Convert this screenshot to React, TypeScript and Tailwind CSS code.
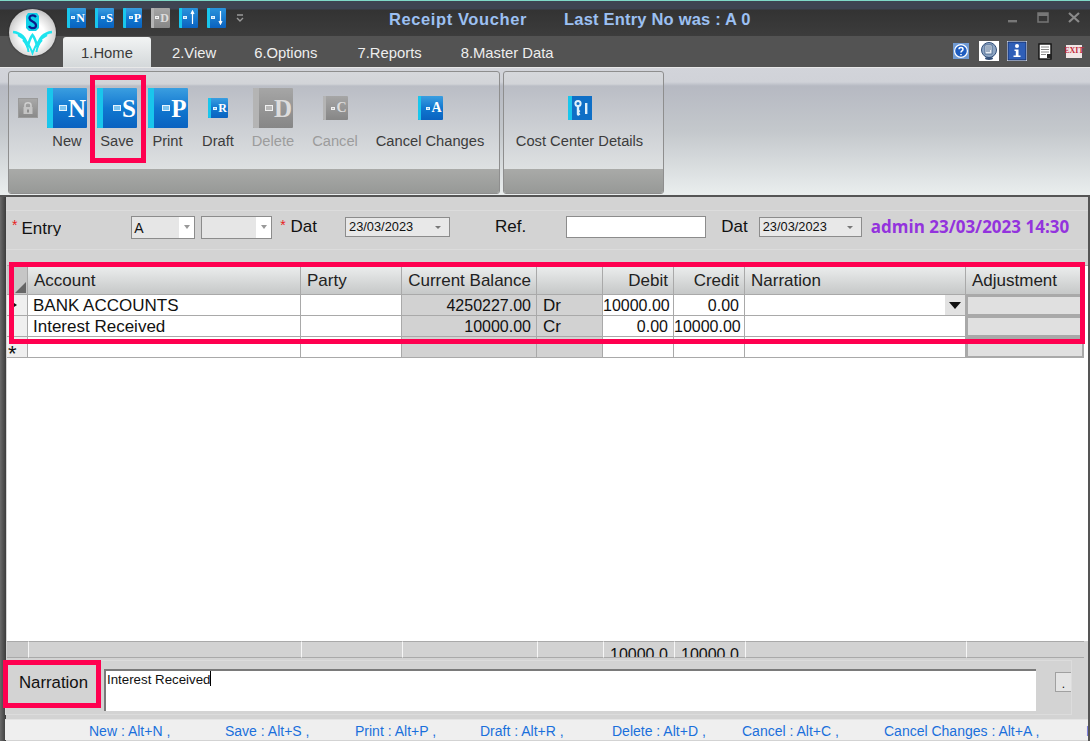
import React from 'react';

const columns = 'grid grid-cols-[21px_273px_101px_135px_66px_71px_71px_221px_118px]';

const BookIcon = ({ letter, size, disabled = false }: { letter?: string; size: 'xs' | 'sm' | 'md' | 'lg'; disabled?: boolean }) => {
  const box = { xs: 'w-[19px] h-[20px]', sm: 'w-[20px] h-[20px]', md: 'w-[25px] h-[24px]', lg: 'w-[40px] h-[40px]' }[size];
  const spine = size === 'lg' ? 'w-[6px]' : 'w-[3px]';
  const text = { xs: 'text-[12px]', sm: 'text-[12px]', md: 'text-[14px]', lg: 'text-[25px]' }[size];
  const tiny = size === 'lg' ? 'w-[8px] h-[6px] mr-[1px]' : 'w-[4px] h-[3px] mr-[1px]';
  return (
    <div className={`relative flex items-center justify-end pr-[1px] rounded-[1px] overflow-hidden ${box} ${disabled ? 'bg-gradient-to-b from-[#a6a6a6] to-[#868686]' : 'bg-gradient-to-b from-[#3a9ee0] via-[#1078d0] to-[#0a62c0]'}`}>
      <div className={`absolute left-0 top-0 bottom-0 ${spine} ${disabled ? 'bg-[#b4b4b4]' : 'bg-[#19c6ec]'}`} />
      <div className={`border border-white/80 ${tiny} ${disabled ? 'bg-[#b8b8b8]' : 'bg-[#7cc4f0]'}`} />
      {letter && <span className={`font-['Liberation_Serif',serif] font-bold leading-none ${text} ${disabled ? 'text-[#dcdcdc]' : 'text-white'}`}>{letter}</span>}
    </div>
  );
};

const ArrowIcon = ({ up }: { up: boolean }) => (
  <div className="relative flex items-center justify-end pr-[3px] gap-[3px] w-[19px] h-[20px] bg-gradient-to-b from-[#2a93dc] to-[#0a62c0] rounded-[1px] overflow-hidden">
    <div className="absolute left-0 top-0 bottom-0 w-[3px] bg-[#19c6ec]" />
    <div className="w-[4px] h-[3px] border border-white/80 bg-[#7cc4f0]" />
    <svg width="5" height="15" viewBox="0 0 5 15">
      <path d={up ? 'M2.5 1 L2.5 14 M1 4 L2.5 1 L4 4' : 'M2.5 1 L2.5 14 M1 11 L2.5 14 L4 11'} stroke="white" strokeWidth="1.2" fill="none" />
    </svg>
  </div>
);

const Logo = () => (
  <div className="absolute left-[9px] top-[9px] w-[47px] h-[47px] rounded-full bg-[radial-gradient(circle_at_50%_55%,#ffffff_35%,#d8d8d8_62%,#8c8c8c_100%)] shadow-[0_0_2px_#222]">
    <svg width="47" height="47" viewBox="0 0 47 47">
      <path d="M19 4 L28 4 L30 7 L30 19 L27 22 L20 22 L17 19 L17 7 Z" fill="#10cfe8" />
      <path d="M27 8 C25 5.5 20 6 20.5 9.5 C21 13 27 12 27 16.5 C27 20 21.5 20 20 17" stroke="#0c1a8a" strokeWidth="2.2" fill="none" />
      <path d="M4 23 C12 24 17 28 18.5 38 C20 33 21 29 23.5 26 C26 29 27 33 28.5 38 C30 28 35 24 43 23" stroke="#1fe4ee" strokeWidth="2.6" fill="none" />
      <path d="M9 26 C15 29 20 34 23.5 44 C27 34 32 29 38 26 M14 31 C17 34 19 38 19.5 43 M33 31 C30 34 28 38 27.5 43" stroke="#1fe4ee" strokeWidth="2" fill="none" />
    </svg>
  </div>
);

const RibbonButton = ({ width, label, disabled = false, icon }: { width: string; label: string; disabled?: boolean; icon: React.ReactNode }) => (
  <div className={`flex flex-col items-center ${width}`}>
    <div className="h-[40px] flex items-center justify-center">{icon}</div>
    <span className={`mt-[3px] text-[14.7px] leading-[20px] whitespace-nowrap ${disabled ? 'text-[#9c9c9c]' : 'text-[#3c3c3c]'}`}>{label}</span>
  </div>
);

const Combo = ({ value, width }: { value: string; width: string }) => (
  <div className={`flex h-[23px] border border-[#8c8c8c] bg-[#e6e6e6] ${width}`}>
    <span className="flex-1 pl-[2px] text-[14px] leading-[23px] text-[#111]">{value}</span>
    <div className="w-[15px] bg-white flex items-center justify-center">
      <div className="w-0 h-0 border-x-[3px] border-x-transparent border-t-[4px] border-t-[#999]" />
    </div>
  </div>
);

const DateBox = ({ width }: { width: string }) => (
  <div className={`flex items-center h-[20px] border border-[#8c8c8c] bg-[#e8e8e8] pl-[3px] ${width}`}>
    <span className="flex-1 text-[12.8px] leading-[18px] text-[#111]">23/03/2023</span>
    <div className="mr-[8px] w-0 h-0 border-x-[3px] border-x-transparent border-t-[3px] border-t-[#777]" />
  </div>
);

const Cell = ({ children, className = '' }: { children?: React.ReactNode; className?: string }) => (
  <div className={`border-r border-b border-[#a9a9a9] leading-[20px] text-[#111] whitespace-nowrap overflow-hidden ${className}`}>{children}</div>
);

const headers = [
  { label: 'Account', cls: 'pl-[6px]' },
  { label: 'Party', cls: 'pl-[6px]' },
  { label: 'Current Balance', cls: 'text-right pr-[5px]' },
  { label: '', cls: '' },
  { label: 'Debit', cls: 'text-right pr-[5px]' },
  { label: 'Credit', cls: 'text-right pr-[5px]' },
  { label: 'Narration', cls: 'pl-[6px]' },
  { label: 'Adjustment', cls: 'pl-[6px]' },
];

const rows = [
  { account: 'BANK ACCOUNTS', balance: '4250227.00', side: 'Dr', debit: '10000.00', credit: '0.00', combo: true },
  { account: 'Interest Received', balance: '10000.00', side: 'Cr', debit: '0.00', credit: '10000.00', combo: false },
  { account: '', balance: '', side: '', debit: '', credit: '', combo: false },
];

const shortcuts = [
  { text: 'New : Alt+N ,', w: 'w-[136px]' },
  { text: 'Save : Alt+S ,', w: 'w-[130px]' },
  { text: 'Print : Alt+P ,', w: 'w-[125px]' },
  { text: 'Draft : Alt+R ,', w: 'w-[132px]' },
  { text: 'Delete : Alt+D ,', w: 'w-[130px]' },
  { text: 'Cancel : Alt+C ,', w: 'w-[142px]' },
  { text: 'Cancel Changes : Alt+A ,', w: 'w-[202px]' },
  { text: 'Exit', w: 'w-[30px]' },
];

export default function App() {
  return (
    <div className="relative w-[1090px] h-[741px] overflow-hidden flex flex-col bg-[#d3d3d3] font-['Liberation_Sans',Arial,sans-serif]">
      {/* Title bar */}
      <div className="h-[36px] flex items-center pl-[67px] pt-[2px] border-t border-[#7fd8c8] bg-[linear-gradient(#3e4452_0,#3e4452_8px,#333_9px,#3c3c3c_100%)]">
        <div className="flex gap-[9px] mb-[1px] -mt-[3px]">
          <BookIcon size="xs" letter="N" />
          <BookIcon size="xs" letter="S" />
          <BookIcon size="xs" letter="P" />
          <BookIcon size="xs" letter="D" disabled />
          <ArrowIcon up />
          <ArrowIcon up={false} />
        </div>
        <svg className="ml-[10px] -mt-[3px]" width="8" height="9" viewBox="0 0 8 9">
          <path d="M1 1 H7 M1 4 L4 7 L7 4" stroke="#999" strokeWidth="1.4" fill="none" />
        </svg>
        <span className="ml-[145px] text-[16.5px] font-bold text-[#9cc0f2] tracking-[0.6px] whitespace-nowrap">Receipt Voucher</span>
        <span className="ml-[37px] text-[16.5px] font-bold text-[#9cc0f2] tracking-[0.2px] whitespace-nowrap">Last Entry No was : A 0</span>
        <div className="ml-auto mr-[10px] flex gap-[19px] items-center -mt-[4px]">
          <svg width="11" height="11" viewBox="0 0 11 11"><rect x="1" y="8" width="9" height="2.4" fill="#777" /></svg>
          <svg width="12" height="11" viewBox="0 0 12 11"><rect x="1" y="1" width="10" height="9" fill="none" stroke="#777" strokeWidth="1.5" /><rect x="1" y="1" width="10" height="3" fill="#777" /></svg>
          <svg width="12" height="11" viewBox="0 0 12 11"><path d="M1 1 L11 10 M11 1 L1 10" stroke="#8a8a8a" strokeWidth="2.2" /></svg>
        </div>
      </div>

      {/* Tabs */}
      <div className="h-[31px] flex bg-[#535353] pl-[63px] text-[14.8px] text-[#eeeeee]">
        <div className="mt-[1px] w-[88px] h-[30px] rounded-t-[3px] bg-gradient-to-b from-[#f2f4f4] to-[#d4d8da] text-[#3a3a3a] leading-[32px] text-center">1.Home</div>
        <span className="ml-[21px] leading-[34px]">2.View</span>
        <span className="ml-[38px] leading-[34px]">6.Options</span>
        <span className="ml-[40px] leading-[34px]">7.Reports</span>
        <span className="ml-[39px] leading-[34px]">8.Master Data</span>
        <div className="ml-auto mr-[8px] flex items-center gap-[10px] -mt-[1px]">
          <svg width="16" height="16" viewBox="0 0 16 16"><rect width="16" height="16" fill="#6f9ad4" /><circle cx="8" cy="8" r="6.4" fill="#1d5cc0" stroke="white" strokeWidth="1.2" /><path d="M6 6.3 C6 4 10 4 10 6.3 C10 8 8 7.8 8 9.6 M8 11 V12.2" stroke="white" strokeWidth="1.5" fill="none" /></svg>
          <svg width="20" height="20" viewBox="0 0 20 20"><rect width="20" height="20" fill="white" /><ellipse cx="10" cy="9" rx="7.5" ry="7.5" fill="#8ea6c4" stroke="#33507a" /><rect x="6" y="4" width="7" height="9" fill="#e8eef6" stroke="#33507a" strokeWidth="0.7" /><path d="M7 6 H12 M7 8 H12 M7 10 H11" stroke="#33507a" strokeWidth="0.8" /><ellipse cx="10" cy="17.5" rx="4" ry="1.4" fill="#33507a" /></svg>
          <svg className="-ml-[2px]" width="20" height="20" viewBox="0 0 20 20"><rect width="20" height="20" fill="white" /><rect x="1" y="1" width="18" height="18" fill="#2f5fb8" stroke="#16306a" /><circle cx="10" cy="5" r="2" fill="white" /><path d="M7.5 8.5 H11.5 V14.5 H13.5 V16 H6.5 V14.5 H8.8 V10 H7.5 Z" fill="white" /></svg>
          <svg className="ml-[1px]" width="15" height="17" viewBox="0 0 15 17"><rect x="1" y="1" width="12" height="15" fill="white" stroke="#111" strokeWidth="1.4" /><path d="M3 4 H11 M3 6.5 H11 M3 9 H11 M3 11.5 H8" stroke="#888" /><rect x="9" y="11" width="4" height="4" fill="#222" /></svg>
          <div className="ml-[3px] w-[16px] h-[13px] bg-[#f2e6e6] flex items-center justify-center text-[8px] leading-none font-bold font-['Liberation_Serif',serif] text-[#c22a3a]">EXIT</div>
        </div>
      </div>

      {/* Ribbon */}
      <div className="h-[128px] flex gap-[3px] pt-[3px] pl-[8px] border-t border-[#e8e8e8] bg-[linear-gradient(#d2d4da_0,#d0d2d8_14px,#b6b9c2_18px,#c4c8cc_50%,#eaeeee_100%)]">
        <div className="w-[492px] h-[123px] flex flex-col rounded-[3px] border border-[#8e8e8e] bg-[linear-gradient(#d6d8dc_0,#d2d4d8_12px,#babdc5_14px,#e8ebea_100%)] overflow-hidden">
          <div className="flex-1 flex pt-[16px] pl-[9px]">
            <div className="w-[20px] h-[40px] mr-[4px] flex items-center">
              <div className="w-[20px] h-[20px] bg-gradient-to-b from-[#a8a8a8] to-[#8a8a8a] border border-[#9a9a9a] flex items-center justify-center">
                <svg width="12" height="14" viewBox="0 0 12 14"><path d="M3 6 V4 C3 1 9 1 9 4 V6" stroke="#d0d0d0" strokeWidth="1.5" fill="none" /><rect x="1.5" y="6" width="9" height="7" fill="#c4c4c4" /><rect x="5.3" y="8.5" width="1.4" height="3" fill="#777" /></svg>
              </div>
            </div>
            <RibbonButton width="w-[50px]" label="New" icon={<BookIcon size="lg" letter="N" />} />
            <RibbonButton width="w-[50px]" label="Save" icon={<BookIcon size="lg" letter="S" />} />
            <RibbonButton width="w-[51px]" label="Print" icon={<BookIcon size="lg" letter="P" />} />
            <RibbonButton width="w-[50px]" label="Draft" icon={<BookIcon size="sm" letter="R" />} />
            <RibbonButton width="w-[60px]" label="Delete" disabled icon={<BookIcon size="lg" letter="D" disabled />} />
            <RibbonButton width="w-[64px]" label="Cancel" disabled icon={<BookIcon size="md" letter="C" disabled />} />
            <RibbonButton width="w-[126px]" label="Cancel Changes" icon={<BookIcon size="md" letter="A" />} />
          </div>
          <div className="h-[24px] bg-gradient-to-b from-[#a9aaa8] to-[#979997]" />
        </div>
        <div className="w-[161px] h-[123px] flex flex-col rounded-[3px] border border-[#8e8e8e] bg-[linear-gradient(#d6d8dc_0,#d2d4d8_12px,#babdc5_14px,#e8ebea_100%)] overflow-hidden">
          <div className="flex-1 flex justify-center pt-[16px] pr-[8px]">
            <RibbonButton
              width="w-[140px]"
              label="Cost Center Details"
              icon={
                <svg width="24" height="24" viewBox="0 0 24 24">
                  <rect width="24" height="24" fill="#0f6fc6" />
                  <rect width="4" height="24" fill="#19c6ec" />
                  <circle cx="10" cy="7.5" r="2.6" fill="none" stroke="#dff0fa" strokeWidth="2" />
                  <path d="M8.8 10 H11.2 V14 L12.4 15 L11.2 16.5 L12.4 18.5 L10 20 L8.8 18.5 Z" fill="#dff0fa" />
                  <rect x="17" y="7" width="2.4" height="11" fill="#dff0fa" />
                </svg>
              }
            />
          </div>
          <div className="h-[24px] bg-gradient-to-b from-[#a9aaa8] to-[#979997]" />
        </div>
      </div>

      {/* Form body */}
      <div className="flex-1 min-h-0 flex border-t-2 border-[#555]">
        <div className="w-[6px] bg-gradient-to-r from-[#6a6a6a] to-[#3c3c3c]" />
        <div className="flex-1 min-w-0 flex flex-col">
          {/* Entry row */}
          <div className="mt-[13px] h-[40px] pl-[6px] flex items-center border-y border-[#dcdcdc] text-[17px] text-[#111] pb-[6px]">
            <span className="text-[#e81c1c] text-[14px] -mt-[4px]">*</span>
            <span className="ml-[4px] h-[17px] leading-[19px] overflow-hidden">Entry</span>
            <div className="ml-[70px]"><Combo value="A" width="w-[64px]" /></div>
            <div className="ml-[6px]"><Combo value="" width="w-[71px]" /></div>
            <span className="ml-[8px] text-[#e81c1c] text-[14px] -mt-[4px]">*</span>
            <span className="ml-[5px]">Dat</span>
            <div className="ml-[28px]"><DateBox width="w-[105px]" /></div>
            <span className="ml-[45px]">Ref.</span>
            <div className="ml-[40px] w-[140px] h-[22px] bg-white border border-[#8c8c8c]" />
            <span className="ml-[15px]">Dat</span>
            <div className="ml-[11px]"><DateBox width="w-[103px]" /></div>
            <span className="ml-[9px] font-['Open_Sans',sans-serif] font-bold text-[17px] text-[#9333dd] whitespace-nowrap">admin 23/03/2023 14:30</span>
          </div>

          {/* Voucher grid */}
          <div className="mt-[15px] ml-[1px] h-[393px] flex flex-col bg-white border-t border-[#a9a9a9]">
            <div className={`${columns} h-[29px]`}>
              <div className="relative border-r border-b border-[#a9a9a9] bg-[#c6c6c6] overflow-hidden">
                <div className="absolute right-[1px] bottom-[1px] w-0 h-0 border-l-[11px] border-l-transparent border-b-[11px] border-b-[#666]" />
              </div>
              {headers.map((h, i) => (
                <div key={i} className={`border-r border-b border-[#a9a9a9] bg-gradient-to-b from-[#eceeee] to-[#c6c8c8] text-[17px] leading-[28px] pt-[1px] text-[#222] whitespace-nowrap overflow-hidden ${h.cls}`}>{h.label}</div>
              ))}
            </div>
            {rows.map((row, i) => (
              <div key={i} className={`${columns} h-[21px]`}>
                <div className="border-r border-b border-[#a9a9a9] bg-[#efefef] overflow-hidden">
                  {i === 0 && <div className="mt-[8px] ml-[7px] w-0 h-0 border-y-[2px] border-y-transparent border-l-[3px] border-l-[#111]" />}
                  {i === 2 && <div className="pl-[1px] text-[22px] leading-[34px] text-[#111]">*</div>}
                </div>
                <Cell className="text-[17px] pl-[5px] pt-[1px]">{row.account}</Cell>
                <Cell />
                <Cell className="bg-[#d2d2d2] text-right text-[16px] pr-[5px] pt-[1px]">{row.balance}</Cell>
                <Cell className="bg-[#d2d2d2] text-[17px] pl-[6px] pt-[1px]">{row.side}</Cell>
                <Cell className="text-right text-[16px] pr-[5px] pt-[1px]">{row.debit}</Cell>
                <Cell className="text-right text-[16px] pr-[5px] pt-[1px]">{row.credit}</Cell>
                <Cell className="flex justify-end">
                  {row.combo && (
                    <div className="w-[20px] h-[20px] bg-[#e2e2e2] flex items-center justify-center">
                      <div className="w-0 h-0 border-x-[6px] border-x-transparent border-t-[7px] border-t-[#111]" />
                    </div>
                  )}
                </Cell>
                <div className="border-2 border-[#a9a9a9] bg-[#e0e0e0]" />
              </div>
            ))}
            <div className="flex-1 bg-white" />
            <div className={`${columns} h-[17px] bg-[#d2d2d2]`}>
              <div className="border-y border-[#a9a9a9] bg-[#c8c8c8]" />
              {['', '', '', '', '10000.0', '10000.0', '', ''].map((t, i) => (
                <div key={i} className="border-y border-[#a9a9a9] border-l border-l-white/80 text-[16px] leading-[20px] pt-[3px] pl-[6px] text-[#111] overflow-hidden whitespace-nowrap">{t}</div>
              ))}
            </div>
          </div>

          {/* Narration */}
          <div className="mt-[2px] h-[55px] flex border border-[#dcdcdc] mr-[16px] -ml-[1px]">
            <div className="w-[98px] flex items-center justify-center text-[16.8px] text-[#111] pb-[10px] pr-[3px]">Narration</div>
            <div className="mt-[8px] h-[42px] w-[932px] bg-white border-t-2 border-l-2 border-[#7a7a7a] text-[13.3px] leading-[18px] pl-[1px] text-[#111]">
              Interest Received<span className="inline-block w-px h-[15px] -mb-[2px] bg-black" />
            </div>
            <div className="mt-[11px] ml-[19px] w-[16px] h-[20px] bg-[#e4e4e4] border-l border-y border-[#a0a0a0] text-[12px] leading-[22px] text-center text-[#111]">.</div>
          </div>

          {/* Shortcut hints */}
          <div className="mt-[4px] h-[21px] -ml-[1px] flex pl-[84px] bg-[#efefef] border-t border-[#e4e4e4] text-[14px] leading-[22px] text-[#1a6fdc] overflow-hidden whitespace-nowrap">
            {shortcuts.map((s) => (
              <span key={s.text} className={`shrink-0 ${s.w}`}>{s.text}</span>
            ))}
          </div>
        </div>
        <div className="w-[2px] bg-[#555]" />
      </div>

      {/* Pink callouts drawn over the screen */}
      <div className="absolute left-[90px] top-[75px] w-[56px] h-[88px] border-[5px] border-[#ff0050]" />
      <div className="absolute left-[9px] top-[262px] w-[1076px] h-[82px] border-[5px] border-[#ff0050]" />
      <div className="absolute left-[3px] top-[660px] w-[98px] h-[48px] border-[5px] border-[#ff0050]" />

      <Logo />
    </div>
  );
}
